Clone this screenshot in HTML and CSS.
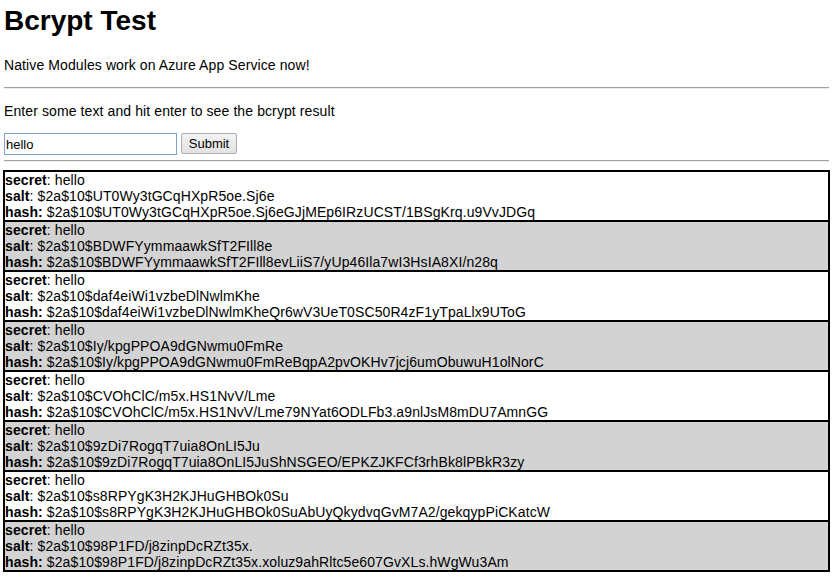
FILE: index.html
```html
<!DOCTYPE html>
<html>
<head>
<meta charset="utf-8">
<title>Bcrypt Test</title>
<link rel="stylesheet" href="styles.css">
</head>
<body>
<h1 class="title">Bcrypt Test</h1>
<p class="lead">Native Modules work on Azure App Service now!</p>
<hr class="rule">
<p class="prompt">Enter some text and hit enter to see the bcrypt result</p>
<form class="form">
  <input class="text-input" type="text" value="hello">
  <button class="submit" type="button">Submit</button>
</form>
<hr class="rule rule-second">
<div class="results">
  <div class="result">
    <div><b>secret</b>: hello</div>
    <div><b>salt</b>: $2a$10$UT0Wy3tGCqHXpR5oe.Sj6e</div>
    <div><b>hash:</b> $2a$10$UT0Wy3tGCqHXpR5oe.Sj6eGJjMEp6IRzUCST/1BSgKrq.u9VvJDGq</div>
  </div>
  <div class="result alt">
    <div><b>secret</b>: hello</div>
    <div><b>salt</b>: $2a$10$BDWFYymmaawkSfT2FIll8e</div>
    <div><b>hash:</b> $2a$10$BDWFYymmaawkSfT2FIll8evLiiS7/yUp46Ila7wI3HsIA8XI/n28q</div>
  </div>
  <div class="result">
    <div><b>secret</b>: hello</div>
    <div><b>salt</b>: $2a$10$daf4eiWi1vzbeDlNwlmKhe</div>
    <div><b>hash:</b> $2a$10$daf4eiWi1vzbeDlNwlmKheQr6wV3UeT0SC50R4zF1yTpaLlx9UToG</div>
  </div>
  <div class="result alt">
    <div><b>secret</b>: hello</div>
    <div><b>salt</b>: $2a$10$Iy/kpgPPOA9dGNwmu0FmRe</div>
    <div><b>hash:</b> $2a$10$Iy/kpgPPOA9dGNwmu0FmReBqpA2pvOKHv7jcj6umObuwuH1olNorC</div>
  </div>
  <div class="result">
    <div><b>secret</b>: hello</div>
    <div><b>salt</b>: $2a$10$CVOhClC/m5x.HS1NvV/Lme</div>
    <div><b>hash:</b> $2a$10$CVOhClC/m5x.HS1NvV/Lme79NYat6ODLFb3.a9nlJsM8mDU7AmnGG</div>
  </div>
  <div class="result alt">
    <div><b>secret</b>: hello</div>
    <div><b>salt</b>: $2a$10$9zDi7RogqT7uia8OnLI5Ju</div>
    <div><b>hash:</b> $2a$10$9zDi7RogqT7uia8OnLI5JuShNSGEO/EPKZJKFCf3rhBk8lPBkR3zy</div>
  </div>
  <div class="result">
    <div><b>secret</b>: hello</div>
    <div><b>salt</b>: $2a$10$s8RPYgK3H2KJHuGHBOk0Su</div>
    <div><b>hash:</b> $2a$10$s8RPYgK3H2KJHuGHBOk0SuAbUyQkydvqGvM7A2/gekqypPiCKatcW</div>
  </div>
  <div class="result alt">
    <div><b>secret</b>: hello</div>
    <div><b>salt</b>: $2a$10$98P1FD/j8zinpDcRZt35x.</div>
    <div><b>hash:</b> $2a$10$98P1FD/j8zinpDcRZt35x.xoluz9ahRltc5e607GvXLs.hWgWu3Am</div>
  </div>
</div>
</body>
</html>
```

FILE: styles.css
```css
html, body {
  margin: 0;
  background: #fff;
}

body {
  padding: 0 6px 0 3px;
  font-family: "Liberation Sans", Arial, sans-serif;
  font-size: 14px;
  line-height: 16px;
  letter-spacing: 0.1px;
  color: #000;
}

.title {
  margin: 5px 0 0 1px;
  font-size: 28px;
  line-height: 32px;
  font-weight: bold;
  letter-spacing: 0;
}

.lead {
  margin: 20px 0 0 1px;
}

.rule {
  margin: 14px 1px 0;
  height: 0;
  border: 0;
  border-top: 1px solid #a0a0a0;
  border-bottom: 1px solid #ececec;
}

.prompt {
  margin: 14px 0 0 1px;
}

.form {
  display: flex;
  align-items: flex-start;
  gap: 4px;
  margin: 14px 0 0 1px;
}

.text-input {
  box-sizing: border-box;
  width: 173px;
  height: 22px;
  margin: 0;
  padding: 0 1px;
  border: 1px solid #7ea1d4;
  font-family: "Liberation Sans", Arial, sans-serif;
  font-size: 13px;
  color: #000;
  outline: none;
}

.submit {
  box-sizing: border-box;
  width: 56px;
  height: 21px;
  margin: 0;
  padding: 0;
  border: 1px solid #adadad;
  border-radius: 2px;
  background: linear-gradient(#f3f3f3, #e2e2e2);
  font-family: "Liberation Sans", Arial, sans-serif;
  font-size: 13px;
  color: #000;
}

.rule-second {
  margin-top: 5px;
}

.results {
  margin-top: 8px;
}

.result {
  border: 2px solid #000;
  border-bottom: 0;
  white-space: nowrap;
}

.result:last-child {
  border-bottom: 2px solid #000;
}

.result.alt {
  background: #d3d3d3;
}

.result b {
  font-weight: bold;
}
```
